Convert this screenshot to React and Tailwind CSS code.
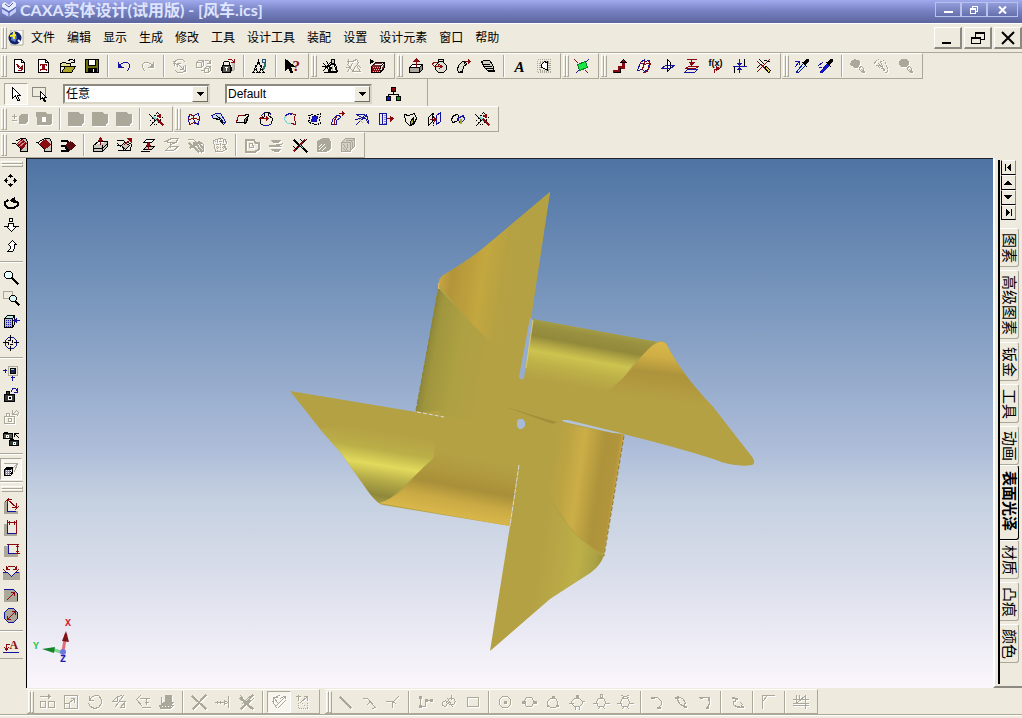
import React, { useState } from 'react';

const K = '#000000';
const W = '#ffffff';
const R = '#8b0a10';
const B = '#1414a0';
const G = '#8c8a80';
const L = '#c9c6bb';
const D = '#aca899';
const Y = '#a8a428';
const C = '#7fd6d6';

// Each icon is a list of [path, stroke, fill, width] or { t, x, y, ... } for lettering.
// Integer coordinates land on pixel centres of a 16px grid.
const ICONS = {
  // standard
  newScene: [['M2 1h7l3 3v10H2z', K, W], ['M9 1v3h3', K], ['M4 6l3 4h2v2H6', R], ['M5 6l4 4M10 7v4M9 8v4', R]],
  newSheet: [['M2 1h7l3 3v10H2z', K, W], ['M9 1v3h3', K], ['M5 6h4M5 11h4M6 7v4M7 6v5M8 7v4M4 6v1M10 6v1M4 11v1M10 11v1', R]],
  open: [['M0 5h1l1-1h3l1 1h4v3H0z', K, '#e8e490'], ['M0 14V6M0 14h11l4-6H5l-4 6', K, Y], ['M8 2l2-1h2l2 2M14 1v3h-3', K]],
  save: [['M1 1h13v13H1z', K, '#6b6b10'], ['M4 1h7v6H4z', K, W], ['M4 10h8v4H4z', K, K], ['M9 11v2', W]],
  undo: [['M2 4v5h5', B], ['M3 8l2-3 3-1h3l2 2v3l-2 3', B], ['M2 5l3 3H2z', B, B]],
  redo: [['M13 4v5H8', D], ['M12 8l-2-3-3-1H4L2 6v3l2 3', D], ['M13 5l-3 3h3z', D, D]],
  link: [['M2 7V3l3-2h5l2 2M4 2L1 5M13 7v5l-3 2H5l-2-2', D], ['M5 5l6 6M5 5h3M5 5v3M11 11H8M11 11V8M1 3l3 3M9 9l4 4', D]],
  boxes: [['M0 4h5v5H0zM0 4l2-2h5L5 4M7 2v5L5 9', D], ['M8 10h4v4H8zM8 10l2-2h4l-2 2M14 8v4l-2 2M9 2h3l2 3M14 2v3h-3', D], ['M5 12h2', D]],
  lock: [['M11 4h3v7l-3 2', D, L], ['M2 7h8v7H2zM1 9v3M11 9v3', K, '#55544e'], ['M3 7V4l1-1h4l1 1v3', K], ['M6 9v3M5 9h2', W], ['M8 1h3l3 3M14 1v3h-3', R]],
  find: [['M1 14l2-6 2 6M7 14l2-6 2 6M4 8l2-6 2 6', K], ['M0 14h2M4 14h4M10 14h2M6 2v3M2 11h2M8 11h2M5 5h2', K], ['M10 1h3v3h-3z', '#2a4a70', '#bff3f3'], ['M12 5v3l-1 2', '#2a7070', 'none', 2]],
  help: [['M1 1v11l3-3 2 5h2L6 8h4z', K, K], { t: '?', x: 8, y: 12, c: R, s: 15, b: true, f: 'Liberation Serif' }],
  team: [['M9 1h3v4H9z', K, L], ['M8 6l-2 7h9l-2-7z', K, '#f4f1e8'], ['M1 5l6 7M8 4L1 12M4 3l4 6M0 8h6M12 7l2 6M2 14h12M9 9l-2 4', K], ['M10 8v4', D]],
  teamOff: [['M1 6l5 6M6 5l-5 8M1 3h4M2 1v4M6 3l4-2 2 3-2 3 4 6M7 13h7M9 8l-3 5M0 9h3M12 7l2 2', D]],
  crate: [['M1 8h9v6H1z', K, R], ['M1 8l4-4h9l-4 4M14 4v5l-4 5', K, '#7c2a2c'], ['M5 6h6l1-1', W], ['M2 9h7M3 11h7M2 13h7', '#e0b8b8', 'none', 1, '1 1'], ['M0 1l3 2M0 1v4l3-2', K, K]],
  // shape features
  extrude: [['M1 9l3-3h10l-3 3z', K, W], ['M1 9h10v5H1z', K, '#aaa89f'], ['M11 9l3-3v5l-3 3z', K, G], ['M8 8V1M8 0l-3 3h6z', R, R]],
  spin: [['M6 1h5v3l3 3v4l-3 3H6l-3-3V7l3-3z', K, '#dedbd0'], ['M6 3h5', K], ['M5 4H1l-1 2 2 2h7M7 6l3 2-3 2M6 6v2', R]],
  sweep: [['M2 14l-1-3 1-4 4-4h3l1 3-3 2-1 5z', K, '#dedbd0'], ['M2 14h4M7 3l2 3', K], ['M9 3h5M12 1l2 2-2 2z', R, R]],
  loft: [['M1 3l3-1h5l3 4 2 7H8L3 8z', K, '#d3d0c6'], ['M1 3l2 3h6M3 8h8M5 10h7M7 12h7', K]],
  textA: [{ t: 'A', x: 2, y: 13, c: K, s: 15, b: true, i: true, f: 'Liberation Serif' }],
  stamp: [['M1 1h13v13H1z', D, 'none', 1, '1 1'], ['M3 3h9v9H3z', D, 'none', 2, '1 1'], ['M5 9V6l3-3 2 1 1-1v9l-3-2z', K, W]],
  plane: [['M3 6l8-3 2 6-8 3z', '#0b7a20', '#18e64a'], ['M0 1l3 3M11 12l2 2', R], ['M14 1l-2 2M4 12l-2 2', B]],
  curve: [['M2 13h5V9h4V4', R, 'none', 3], ['M11 1l-3 3h6z', K, R], ['M2 14h6v-4', K]],
  patch: [['M1 12l3-8 4-3v2l5-1-1 9-4 2-2-2z', B, '#f7f4ea'], ['M4 4l3 2 5-1M8 3l-2 8M12 3l2 2-3 8-4 1', R]],
  planes3: [['M1 10h9l4-3H5z', B], ['M7 1v12l3-3V4z', K, W], ['M1 10h9l4-3H8', B]],
  compress: [['M3 1h9M7 1v5M5 4h5L7 7z', R, R], ['M4 8h10l-3 2H1z', R], ['M3 11h10l-3 3H0z', B]],
  fx: [{ t: 'f(x)', x: 0, y: 7, c: K, s: 9, b: true, f: 'Liberation Sans' }, ['M6 14v-3l3-1', R], ['M8 8l3 2-3 2z', R, R]],
  offsetC: [['M2 14V8h10V1', K], ['M1 8h13M7 1v13', B], ['M5 5h4L7 7zM5 11h4L7 9z', B, B]],
  trim: [['M1 3l12 11M1 13L13 1', R], ['M4 6l-3 3M8 2l5 1M3 1l4 4', K], ['M8 9l2-1 4 4-2 2z', K, '#e4d74a']],
  dropA: [['M3 12l6-7 2 2-7 7H2z', B, '#c8f2f2'], ['M9 4l3-3h2v2l-3 3z', K, K], ['M8 4l4 4', K], ['M1 8l2-2M1 3h4v3M5 3L2 6', B]],
  dropB: [['M3 12l6-7 2 2-7 7H2z', B, '#1515e0'], ['M9 4l3-3h2v2l-3 3z', K, K], ['M8 4l4 4', K], ['M0 7l4-3M1 9h2', B]],
  blobA: [['M1 3l3-2 3 1 2 1v3L7 9H4L2 7 0 6z', D, D], ['M9 9l2-1 2 2v2l1 2M9 9v2l3 3M11 11l2 3', D]],
  blobB: [['M1 3l3-2 2 2 3-1 2 2v2l2 3v5h-2l-3-4-3-1-3-2-2-2z', D, 'none', 1, '2 1'], ['M4 5l6 6M3 7l5 1M6 3l2 5', D]],
  blobC: [['M3 1h5l2 2v3L8 8H3L1 6V3z', D, D], ['M9 9l2-1 2 2v2l1 2M9 9v2l3 3M11 11l2 3', D]],
  // selection
  pointer: [['M4 1v11l3-3 2 5h2L9 9h3z', K, W]],
  pick: [['M0 1h13v9H0z', G], ['M8 5v8l2-2 2 4h1l-1-4h2z', K, W]],
  tree: [['M8 5v3M3 11V8h10v3', K], ['M6 1h4v4H6z', K, R], ['M1 10h4v4H1z', K, '#1515c8'], ['M11 10h4v4h-4z', K, '#128a20']],
  // boolean
  bool1: [['M0 5h4M2 3v4M0 9h4', D], ['M7 5l2-2h6v7l-2 2H7z', D, D]],
  bool2: [['M0 1h9l1 2h5v8l-1 2H1V5H0z', D, D], ['M6 6h3v4H6z', W, W]],
  bool3: [['M0 1h10l2 2h3v8l-2 2v1H0z', D, D]],
  cutter: [['M9 1l5 5-7 8-5-5z', K, 'none', 1, '2 1'], ['M1 3l4 4M6 5v4M2 14l5-5', K], ['M6 6l3 3', C, 'none', 2], ['M9 8l5 5M9 4h2M11 3v2', R, 'none', 2]],
  // surface
  mesh: [['M3 3l4 1 5-2 1 5-1 6-4-2-5 2-1-6z', B], ['M7 4l1 8', B], ['M3 3l4 1M2 8l5-1 6 1M8 11l-5 2', R]],
  ruled: [['M1 4l5-2h4l5 8-1 2-5-4-3-1H3z', B, '#c8dcf4'], ['M3 7l6 1 4 5M6 4l6 5', K]],
  bevel: [['M4 4h4l6-1-2 8H2z', K, '#f1eee3'], ['M2 10l2-6h4', R], ['M10 8l3-3-1 6-2 1z', K, G]],
  revolve: [['M6 1h4v3l4 3-1 5-3 2H5l-3-2V8l4-3z', K], ['M6 1L3 4M11 1l1 2M5 14h5l3-2', B], ['M1 7h7M8 5l2 2-2 2zM4 5l-3 2', R, R]],
  outline: [['M3 4l4-2 6 1-1 3 1 7', R], ['M3 4L2 8l3 4h4', C], ['M3 4l4-2 2 1', B], ['M9 12l4 1', R]],
  inset: [['M2 4l4-1 3 1 5-2-1 7 1 3-4 1-8-2 1-4z', K, 'none', 1, '2 1'], ['M6 5h5l-1 5H5z', B, '#1515e0']],
  sweepS: [['M3 13H1l1-5 4-4h3l1 2-4 3v4z', B, '#f6f3e8'], ['M6 5L4 9v4', R], ['M9 2h5M12 0l2 2-2 2z', R, R]],
  strips: [['M2 3h7l4 2 1 7', B], ['M2 3l5 3 4 1 3 5M1 8l5-1 6-4M2 13l4-4 5-4', B], ['M5 8l3 3', D]],
  thick: [['M1 2h7v11H1zM4 2v11', B], ['M6 3v9', '#8888d0', 'none', 2, '1 1'], ['M9 7h5M12 5l3 2-3 3z', R, R]],
  corner: [['M2 3l4 1 6-2 2 5-3 6-4 1-4-4z', K, '#eeeade'], ['M11 6l-3 4v3l3-1z', K, Y]],
  mirror: [['M6 2v8l-4 4V6z', K], ['M14 1v9l-4 3V4z', B], ['M7 1v13', K, 'none', 1, '2 1'], ['M4 8h6M8 6l2 2-2 2z', R, R]],
  join: [['M1 8l2-4 4-1 2 3-3 4-4 1z', K], ['M7 7l6-3 1 4-4 4-2-3z', B, '#e5e2d6'], ['M10 8v3', Y, 'none', 2]],
  // face ops
  fillet: [['M9 1h4l2 3v10H8z', K, L], ['M4 7l6-5 4 4-5 6z', R, R], ['M5 7l5-4M7 9l5-4', '#d49090'], ['M0 6h3l5 5v3M4 3l5-2', K]],
  chamfer: [['M9 1h4l2 3v10H8z', K, L], ['M3 7l6-5 5 5-6 5z', R, R], ['M0 5h2M2 6l6 6v2M3 4l5-3', K]],
  draft: [['M1 3h5l2 2', K, 'none', 2], ['M5 8l5-4 5 4-4 4-3 1z', '#5a0a0e', '#5a0a0e'], ['M1 8h3l3 4M1 13h6', K, 'none', 2]],
  shell: [['M1 8l5-4h9l-5 4z', K, W], ['M1 8v6h9l5-5V4', K, L], ['M1 11h9l5-5M10 8v5', K], ['M8 7V2M6 3l2-3 2 3z', R, R]],
  split: [['M1 3h6l2 2M1 8h4l3 5h6l1-6-3-2', K, 'none'], ['M5 8l3-3 5 3-4 4z', K, L], ['M2 13h5M1 6l3 3', K], ['M8 7l5-4M11 1h4v4z', R, R]],
  moveF: [['M3 5l3-3h8l-3 3z', K, W], ['M3 12l3-3h8l-3 3z', K, L], ['M1 14h8', K], ['M8 12V6M6 8l2-3 2 3z', R, R]],
  grayA: [['M1 4l6-3h7l-3 4H5zM1 13l4-4h9l-5 4zM6 6v4M6 7l6-2', D]],
  grayB: [['M0 2h5l3 3 3-1 4 3v7l-4-4', D], ['M5 5h5l4 5M2 10l6-4M1 6l9 8M5 9l5-4M9 8l4 6', D, 'none', 2]],
  grayC: [['M1 3l6-2 6 1 1 4-2 2 2 4-5 2H3l-1-5z', D, 'none', 1], ['M2 4h11M3 7h9M3 10h10M5 2v11M8 1v12M11 2v10', D, 'none', 1, '1 1']],
  grayD: [['M1 2h8l2 3h3v7l-3 2H1z', D, 'none', 2], ['M5 6h3l1 4H5z', D]],
  grayE: [['M3 3h9l-2 2H5zM1 8h10l3-2M3 12h9l-2 2H6z', D, D], ['M1 9h12', D]],
  grayF: [['M1 4l5-3h6l2 3v7l-4 3H1z', D, D], ['M3 12l5-5M3 9l2-2M6 13l3-3', W]],
  grayG: [['M1 5l4-4h9v8l-5 5H1zM1 5h9v9M10 5l4-4', D, '#d4d0c3', 1], ['M3 7l4 6M3 11l3 3M7 7v3M12 5v5M6 3h5', D]],
  removeF: [['M2 3l3 3M9 9l5 5', K, 'none', 2], ['M2 13L12 3', R, 'none', 2], ['M8 2l3 3 3-3M1 9l3 3 2-4M5 6l4 4', K], ['M8 8l2 2', C]],
  // camera
  pan: [['M7 1L5 3h4zM7 13l-2-2h4zM1 7l2-2v4zM13 7l-2-2v4z', K, K], ['M7 1v3M7 10v3M1 7h3M10 7h3', K]],
  orbit: [['M4 5L1 7v2l3 3h7l3-2V7l-2-1', K, 'none', 2], ['M7 5l4-3v5z', K, K]],
  dolly: [['M6 1h3v3H6zM5 6h5v3h3l-5 5-5-5h2z', K, W], ['M3 9H1M13 9h2', K]],
  walk: [['M6 4l3-3 4 4h-2v4l-2 3H4l3-3V7L5 5z', K, W]],
  zoom: [['M3 2h4l2 2v3L7 9H3L1 7V4z', K, '#e6ffff'], ['M9 9l5 5', K, 'none', 2]],
  zoomWin: [['M0 0h9v7H0z', D], ['M8 4h3l2 2v2l-2 2H8L6 8V6z', K, '#d8f6f4'], ['M12 10l3 3', K, 'none', 2]],
  lookAt: [['M1 5h8v9H1z', K, '#b8b8e0'], ['M1 5l3-3h7L9 5zM11 2v9l-2 3', K, '#bfeeee'], ['M2 7h6M2 9h6M2 11h6M2 13h6', B, 'none', 1, '1 1'], ['M12 7h4M13 5l-3 2 3 2z', B, B]],
  target: [['M5 2h5l3 3v5l-3 3H5l-3-3V5z', B], ['M7 0v4M7 11v4M0 7h4M11 7h4', K], ['M5 5h2M9 5v2M5 9v-2M9 9H7', K]],
  viewBox: [['M5 1h9v9H5z', D], ['M7 3h5v5H7z', K, '#1d2550'], ['M0 5h3M2 4v3M9 11v4M8 12h3', B], ['M8 4h2', C]],
  camNext: [['M1 7h10v7H1zM3 6V4h3v2', K, '#3b3b33'], ['M5 9h3v3H5z', W, K], ['M8 4l1-3h3l2 3M14 1v4h-3', B]],
  camOff: [['M1 7h10v7H1zM3 6V4h3v2', D], ['M5 9h3v3H5z', D], ['M9 5V1M9 5h4M9 5l4-4 2 2-1 3', D]],
  camTwo: [['M0 2h9v5H0zM1 1h3', K, '#55554c'], ['M3 4h2v2H3z', W], ['M6 9h9v5H6zM7 8h3', K, '#2c3a34'], ['M10 11h2v2h-2z', W], ['M11 2h4M11 2v3M11 2l4 4', K]],
  render: [['M1 2h13L8 8M14 2l-3 8', D], ['M1 8h6v6H1z', K, '#8888b8'], ['M1 8l2-2h6L7 8M9 6v6l-2 2', K, K], ['M2 9h5M2 11h5M2 13h5', W, 'none', 1, '1 1']],
  // dimensions
  dimAlign: [['M1 4h3v9h10v2H1z', D, D], ['M4 3v10h8', B], ['M4 1l9 8M4 1h4M4 1v4M13 9H9M13 9V5M2 3l3-3M12 11l3-3', R]],
  dimH: [['M1 4h3v9h9v2H1z', D, D], ['M4 2v11h9V2', B], ['M4 2h9M4 0v5M13 0v13M6 1v3M11 1v3', R]],
  dimV: [['M1 4h4v8h9v2H1z', D, D], ['M5 3v8h8', B], ['M4 2h11M14 2v9M12 11h4M13 4h2M13 9h2', R]],
  dimAng: [['M0 8h4l4 5 4-5h4v7H0z', D, D], ['M0 8h4l4 4 4-4h3', B], ['M3 5l2-3h6l2 3M3 5V2M3 5h3M13 5V2M13 5h-3M0 5l2 2M15 5l-2 2', R]],
  dimRad: [['M1 3h9l4 4v8H1z', D, D], ['M1 3h9l4 4v7', B], ['M4 13l7-7M11 6H8M11 6v3', R]],
  dimDia: [['M5 0h5l4 4v6l-4 4H5l-4-4V4z', B, D], ['M4 11l8-8M12 3H9M12 3v3M4 11V8M4 11h3', R]],
  note: [{ t: 'A', x: 6, y: 10, c: R, s: 12, b: true, f: 'Liberation Serif' }, ['M3 12V6h3M1 9l2 3 2-3', R], ['M0 14h15', B, 'none', 1]],
  // sketch bar
  sk1: [['M1 2h10M9 0l2 2-2 2zM1 7h5v6H1zM9 7h6v6H9z', D]],
  sk2: [['M1 1h13v13H1zM1 9h5v5M5 9l6-5M8 4h3v4', D]],
  sk3: [['M2 2v4h4M2 6l2-3 3-2h4l3 4v4l-3 4-4 1-4-2-2-3', D]],
  sk4: [['M1 7l5-5v5zM4 12L12 1M9 7h5M9 13l4-5v5zM7 2l3-1', D]],
  sk5: [['M1 5l4-4M2 6l4 5M5 4h9M7 13h8M11 5v5M10 8h3', D]],
  sk6: [['M6 1h6v6H6zM4 8h10l-2 2H2zM0 11h14l-3 3H1z', D, D], ['M2 12h10', W, 'none', 1, '1 2'], ['M2 3v6', D]],
  sk7: [['M1 2l13 12M14 1L2 14', D, 'none', 2]],
  sk8: [['M0 8h8M13 2v11M9 6v4l3-2z', D], ['M2 7v2M5 7v2', D]],
  sk9: [['M1 4l12 10M13 1L2 14', D, 'none', 2], ['M1 1l10 13M3 9l7-7M5 12l9-8', D]],
  sk10: [['M2 3h4M2 3v4M3 4l3 4M3 3l5-2M4 12l9-9M7 13l7-7M9 4l3-2h2v2M1 7l4 6', D]],
  sk11: [['M1 2h4M3 1v5M5 8l7-6v4M12 2H9', D], ['M3 8v6h9V8M5 8l6 4', D, 'none', 1, '1 1']],
  line: [['M3 3l10 10', D, 'none', 2]],
  tangent: [['M2 4h4l7 8M6 10l3-3M11 14l3-1', D]],
  perp: [['M13 2l-6 6v5M1 7h6l3 2', D]],
  poly: [['M3 3v9h5V6h6', D], ['M2 2h2v2H2zM2 11h2v2H2zM8 5h2v2H8zM13 5h2v2h-2z', D, D]],
  rings: [['M1 8l3-2 2 3-2 3-3-1zM8 4h4l2 3-2 3H8L6 7zM6 4l5 8M10 1v4', D]],
  rect: [['M2 3h11v9H2z', D]],
  circC: [['M5 2h5l3 3v5l-3 3H5l-3-3V5z', D], ['M7 7h1v1H7z', D, D, 2]],
  circ2: [['M5 3h5l2 3v3l-2 3H5L3 9V6z', D], ['M1 7h2v1H1zM13 7h1v1h-1z', D, D, 2]],
  circ3: [['M5 4h5l2 3v3l-2 3H5l-3-3V7z', D], ['M7 2h2v2H7zM2 11h1v1H2zM12 11h1v1h-1z', D, D]],
  circ4: [['M5 4h5l3 3v2l-3 3H5L2 9V7z', D], ['M7 1h2v3H7zM0 9h4M13 7h2M6 12v3M10 12v3', D, D]],
  circ5: [['M5 4h5l2 3v2l-2 3H5L3 9V7z', D], ['M7 0h2v3H7zM0 9h4M12 9h4M5 14l2-2M11 14l-2-2', D]],
  circ6: [['M5 4h5l2 3v2l-2 3H5L3 9V7z', D], ['M4 1l7 2M11 1L5 3M0 9h4M12 9h4M5 14l2-2M11 14l-2-2', D]],
  arc1: [['M3 3h5l4 4v3l-3 3', D], ['M2 3h2M8 13h2', D, 'none', 2]],
  arc2: [['M3 3l3 6 4 3 2-4-3-4-5-2', D], ['M2 3h2M11 12h1', D, 'none', 2]],
  arc3: [['M2 3h10v6l-2 4', D], ['M3 3h1M11 4v1M9 13h1', D, 'none', 2]],
  spline: [['M3 4h3v3H4v3l4 3h3l2-3-2-2', D], ['M3 3h1M6 4h1M8 12h1M12 12h1', D, 'none', 2]],
  cornerR: [['M1 14V7l5-6h7M1 1h5M1 1v6', D]],
  grid: [['M0 5h15M0 9h15M3 1v8M12 1v13M3 9l9-8M0 11h15M6 1v4', D]],
};

function Icon({ name }) {
  const off = ICONS[name].every((s) => s[1] === D || s[1] === W);
  return (
    <svg
      width="16"
      height="16"
      viewBox="-0.5 -0.5 16 16"
      shapeRendering="crispEdges"
      aria-hidden="true"
      className={`shrink-0 overflow-visible ${off ? 'drop-shadow-[1px_1px_0_#fff]' : ''}`}
    >
      {ICONS[name].map((s, i) =>
        s.t ? (
          <text
            key={i}
            x={s.x}
            y={s.y}
            fill={s.c}
            fontSize={s.s}
            fontWeight={s.b ? 700 : 400}
            fontStyle={s.i ? 'italic' : 'normal'}
            fontFamily={s.f}
          >
            {s.t}
          </text>
        ) : (
          <path
            key={i}
            d={s[0]}
            stroke={s[1]}
            fill={s[2] || 'none'}
            strokeWidth={s[3] || 1}
            strokeDasharray={s[4]}
            strokeLinecap={s[4] ? 'butt' : 'square'}
          />
        )
      )}
    </svg>
  );
}

const sunken = 'border-[#aca899] border-r-white border-b-white bg-[#f7f5ee]';

function Tool({ name, pressed, narrow }) {
  return (
    <button
      type="button"
      aria-label={name}
      className={`flex h-[22px] shrink-0 items-center justify-center border ${narrow ? 'w-[22px]' : 'w-6'} ${
        pressed ? sunken : 'border-transparent'
      }`}
    >
      <Icon name={name} />
    </button>
  );
}

function Grip() {
  return (
    <div className="flex h-[22px] w-2 shrink-0 pl-px">
      <span className="w-[3px] border border-white border-r-[#aca899] border-b-[#aca899]" />
      <span className="w-[3px] border border-white border-r-[#aca899] border-b-[#aca899]" />
    </div>
  );
}

function Sep() {
  return (
    <div className="flex h-[22px] w-2 shrink-0 justify-center">
      <span className="w-[2px] border-r border-l border-l-[#aca899] border-r-white" />
    </div>
  );
}

// "|" in a list of names stands for a separator, "*" marks a pressed button.
function Bar({ items }) {
  return (
    <div className="mr-px flex shrink-0 items-center border-t border-r border-b border-t-white border-r-[#aca899] border-b-[#aca899] py-px pr-1">
      <Grip />
      {items.split(' ').map((n, i) =>
        n === '|' ? <Sep key={i} /> : <Tool key={i} name={n.replace('*', '')} pressed={n.startsWith('*')} />
      )}
    </div>
  );
}

function Combo({ label, options }) {
  return (
    <div className="relative h-5 w-[147px] shrink-0 border-2 border-[#8c8a80] border-r-[#d8d4c6] border-b-[#d8d4c6] bg-white">
      <select aria-label={label} className="block h-full w-full appearance-none bg-white pl-px text-xs leading-4 outline-none">
        {options.map((o) => (
          <option key={o}>{o}</option>
        ))}
      </select>
      <span className="pointer-events-none absolute top-0 right-0 flex h-4 w-4 items-center justify-center border border-white border-r-[#716f64] border-b-[#716f64] bg-[#eeeade]">
        <svg width="7" height="4" viewBox="0 0 7 4" shapeRendering="crispEdges"><path d="M0 0h7L3.500 4z" /></svg>
      </span>
    </div>
  );
}

const menus = ['文件', '编辑', '显示', '生成', '修改', '工具', '设计工具', '装配', '设置', '设计元素', '窗口', '帮助'];

function TitleBar() {
  const btn = 'flex h-[15px] items-center justify-center border border-[#b9c1ee] bg-gradient-to-b from-[#929cd8] to-[#6670ae]';
  return (
    <header className="flex h-[23px] shrink-0 items-start justify-between bg-gradient-to-b from-[#a0aaee] via-[#7580c0] to-[#5c659c] pr-1">
      <div className="flex items-center gap-1 pt-px pl-[2px]">
        <svg width="14" height="17" viewBox="0 0 14 17" aria-hidden="true">
          <path d="M0 3l3-2 4 3 4-4 3 2v4L7 10 0 6z" fill="#e7ecff" />
          <path d="M0 8l7 4 7-5v4l-7 5-7-4z" fill="#c5cefa" />
          <path d="M3 3l4 3 4-4M0 7l7 4v5M7 11l7-5" stroke="#4f5cb4" fill="none" />
        </svg>
        <h1 className="font-['Lato','Noto_Sans_CJK_SC',sans-serif] text-base leading-[17px] font-bold text-[#dfe4ff]">
          CAXA实体设计(试用版) - [风车.ics]
        </h1>
      </div>
      <div className="flex pt-[2px]">
        <button type="button" aria-label="最小化" className={`${btn} w-[26px]`}>
          <span className="mt-1 h-[2px] w-[9px] bg-white" />
        </button>
        <button type="button" aria-label="还原" className={`${btn} w-[26px]`}>
          <svg width="8" height="8" viewBox="-0.5 -0.5 8 8" shapeRendering="crispEdges" fill="none" stroke="#fff"><path d="M2 2V0h5v5H5M0 2h5v5H0zM0 3h5" /></svg>
        </button>
        <button type="button" aria-label="关闭" className={`${btn} w-[31px]`}>
          <svg width="9" height="8" viewBox="0 0 9 8" stroke="#fff" strokeWidth="2"><path d="M1 0.500l7 7M8 0.500l-7 7" /></svg>
        </button>
      </div>
    </header>
  );
}

function MenuBar() {
  const btn = 'flex h-[22px] w-7 items-center justify-center border border-white border-r-2 border-b-2 border-r-[#8c8a80] border-b-[#8c8a80]';
  return (
    <nav className="flex h-[30px] shrink-0 items-center justify-between border-t border-b border-t-white border-b-[#aca899]">
      <div className="flex items-center">
        <Grip />
        <svg width="16" height="16" viewBox="0 0 16 16" className="mr-px" aria-hidden="true">
          <path d="M3 0h12v15H3z" fill="#fff" stroke="#aca899" />
          <circle cx="7" cy="8" r="6.500" fill="#10206a" />
          <path d="M4 3l4 1 1 4-2 4-4-2z" fill="#5a7ac8" />
          <path d="M6 2v7M2 6l6-1" stroke="#f2ec30" strokeWidth="2" />
          <path d="M10 10l2 2" stroke="#fff" strokeWidth="2" />
        </svg>
        {menus.map((m) => (
          <button key={m} type="button" className="px-1.5 text-xs leading-5">{m}</button>
        ))}
      </div>
      <div className="flex gap-[2px]">
        <button type="button" aria-label="最小化窗口" className={btn}>
          <svg width="16" height="16" viewBox="0 0 16 16"><path d="M2 12h9v2H2z" /></svg>
        </button>
        <button type="button" aria-label="还原窗口" className={btn}>
          <svg width="16" height="16" viewBox="-0.5 -0.5 16 16" shapeRendering="crispEdges" fill="none" stroke="#000"><path d="M5 6V2h9v7h-4M5 3h9M1 7h9v6H1zM1 8h9" /></svg>
        </button>
        <button type="button" aria-label="关闭窗口" className={btn}>
          <svg width="16" height="16" viewBox="0 0 16 16" stroke="#000" strokeWidth="2"><path d="M2 2l12 12M14 2L2 14" /></svg>
        </button>
      </div>
    </nav>
  );
}

function SideBar() {
  const groups = [
    ['pan', 'orbit', 'dolly', 'walk'],
    ['zoom', 'zoomWin', 'lookAt', 'target'],
    ['viewBox', 'camNext', 'camOff', 'camTwo'],
    ['*render'],
  ];
  const hgrip = (
    <div className="mb-[3px] flex flex-col pl-px">
      <span className="h-[3px] border border-white border-r-[#aca899] border-b-[#aca899]" />
      <span className="h-[3px] border border-white border-r-[#aca899] border-b-[#aca899]" />
    </div>
  );
  const rule = <div className="my-[3px] h-[2px] border-t border-b border-t-[#aca899] border-b-white" />;
  return (
    <aside className="flex w-[27px] shrink-0 flex-col border-r border-r-black">
      <div className="flex w-[23px] flex-col border-b border-b-[#aca899] pt-[3px] pb-px">
        {hgrip}
        {groups.map((g, i) => (
          <React.Fragment key={i}>
            {i > 0 && rule}
            {g.map((n) => <Tool key={n} name={n.replace('*', '')} pressed={n.startsWith('*')} narrow />)}
          </React.Fragment>
        ))}
      </div>
      <div className="flex w-[23px] flex-col border-t border-b border-t-white border-b-[#aca899] pt-[3px] pb-px">
        {hgrip}
        {['dimAlign', 'dimH', 'dimV', 'dimAng', 'dimRad', 'dimDia'].map((n) => <Tool key={n} name={n} narrow />)}
        {rule}
        <Tool name="note" narrow />
      </div>
    </aside>
  );
}

function Pinwheel() {
  const stops = (list) => list.map(([o, c]) => <stop key={o} offset={o} stopColor={c} />);
  return (
    <svg viewBox="27 159 966 529" className="block h-full w-full" role="img" aria-label="风车">
      <defs>
        <linearGradient id="tl" gradientUnits="userSpaceOnUse" x1="427" y1="350" x2="490" y2="361">
          {stops([[0, '#8f883a'], [0.12, '#a0963e'], [0.5, '#aea143'], [1, '#b4a144']])}
        </linearGradient>
        <linearGradient id="tf" gradientUnits="userSpaceOnUse" x1="439" y1="280" x2="516" y2="292">
          {stops([[0, '#c9a545'], [0.15, '#b3953a'], [0.55, '#c3a73f'], [0.8, '#b6a142'], [1, '#b4a144']])}
        </linearGradient>
        <linearGradient id="rc" gradientUnits="userSpaceOnUse" x1="590" y1="328" x2="577" y2="400">
          {stops([[0, '#a59e47'], [0.1, '#999140'], [0.24, '#928a3b'], [0.34, '#b4a946'], [0.44, '#cdc34f'], [0.6, '#beb148'], [0.82, '#b4a144']])}
        </linearGradient>
        <linearGradient id="rf" gradientUnits="userSpaceOnUse" x1="664" y1="342" x2="656" y2="410">
          {stops([[0, '#d9b74b'], [0.22, '#cfae45'], [0.46, '#ad933b'], [0.7, '#b39b40'], [0.85, '#b4a144']])}
        </linearGradient>
        <linearGradient id="bc" gradientUnits="userSpaceOnUse" x1="550" y1="474" x2="618" y2="484">
          {stops([[0, '#b4a144'], [0.2, '#bda442'], [0.42, '#ccae47'], [0.72, '#ad933b'], [0.92, '#b2953b'], [1, '#d0a545']])}
        </linearGradient>
        <linearGradient id="bf" gradientUnits="userSpaceOnUse" x1="540" y1="560" x2="608" y2="571">
          {stops([[0, '#b4a144'], [0.55, '#bdaf48'], [0.8, '#aba244'], [1, '#8b8337']])}
        </linearGradient>
        <linearGradient id="lc" gradientUnits="userSpaceOnUse" x1="398" y1="430" x2="386" y2="504">
          {stops([[0.05, '#b4a144'], [0.3, '#bbaf48'], [0.5, '#e1da5c'], [0.7, '#b5ab48'], [0.9, '#8f883a'], [1, '#a39b42']])}
        </linearGradient>
        <linearGradient id="lf" gradientUnits="userSpaceOnUse" x1="458" y1="452" x2="446" y2="516">
          {stops([[0.05, '#b4a144'], [0.3, '#b0993e'], [0.52, '#a88f39'], [0.75, '#caaa44'], [1, '#dab84b']])}
        </linearGradient>
      </defs>
      <path
        d="M550 192L530 320 519 378l3 2 10-61 125 23q5-2 9 1 15 31 47 64l39 50q4 6 0 8-20 2-38-6-42-13-90-25L604 556q-5 13-22 22-24 14-34 22L490 651 510 526 383 505Q376 504 363 484L341 453 320 429 290 391 416 412 438 288Q437 281 445 275 475 256 487 245z"
        fill="#b4a144"
      />
      <path d="M438 288L416 411l64 11 30-60z" fill="url(#tl)" />
      <path d="M550 192l-63 53q-14 12-42 29-7 4-6 9 20 30 56 63l24 28 12-55z" fill="url(#tf)" />
      <path d="M532 319l125 23q-18 14-34 36l-35 30-64-28z" fill="url(#rc)" />
      <path d="M590 408q34-28 50-49 12-16 20-17 5-1 8 5 13 26 45 60l39 50q4 6 0 8-20 2-38-6-42-14-120-32z" fill="url(#rf)" />
      <path d="M550 421l74 14-21 119q-22-12-36-31l-25-40z" fill="url(#bc)" />
      <path d="M520 466l44 54q15 22 39 36-2 9-13 17l-40 26-58 50z" fill="url(#bf)" />
      <path d="M320 429l21 24 22 31q10 15 16 19h4q14-9 29-25l21-18 8-50z" fill="url(#lc)" />
      <path d="M440 453q-12 9-24 22-16 22-37 28l131 23 9-62z" fill="url(#lf)" />
      <path d="M439 289l-23 121" stroke="#8a8238" strokeDasharray="5 2" />
      <path d="M439 283q-1 4 0 6" stroke="#e6c878" fill="none" />
      <path d="M417 412l27 5" stroke="#d7d9dc" strokeDasharray="4 2" />
      <path d="M530 318l-11 59q2 4 5 1l9-58z" fill="#97add0" />
      <path d="M533 320l-7 48" stroke="#d8c878" />
      <path d="M507 407q30 10 50 15l-4 2q-20-7-46-17z" fill="#a38e3a" />
      <path d="M562 420h6l57 14-12-1-49-11z" fill="#b4c2d6" />
      <path d="M519 465l-9 61" stroke="#d8dadd" strokeDasharray="5 1" />
      <path d="M624 436l-20 120" stroke="#8f7a30" strokeDasharray="4 2" />
      <path d="M519 419h4l2 3v4l-3 3h-3l-2-3v-5z" fill="#a9bad6" />
    </svg>
  );
}

function Axes() {
  return (
    <svg width="44" height="48" viewBox="0 0 44 48" className="absolute bottom-6 left-[6px]" aria-hidden="true">
      <g fontFamily="Liberation Mono" fontSize="10" fontWeight="700">
        <text x="32" y="10" fill="#d8202c">X</text>
        <text x="0" y="33" fill="#28c840">Y</text>
        <text x="27" y="46" fill="#1c1cb0">Z</text>
      </g>
      <path d="M30 35l3-17" stroke="#e07078" strokeWidth="3" />
      <path d="M33 15l3 11-7-1z" fill="#7c1418" />
      <path d="M28 36l-10-3" stroke="#78d888" strokeWidth="3" />
      <path d="M9 33l13-2-1 6z" fill="#148428" />
      <circle cx="30" cy="36" r="3" fill="#7078e0" />
    </svg>
  );
}

const catalogs = ['图素', '高级图素', '钣金', '工具', '动画', '表面光泽', '材质', '凸痕', '颜色'];
const navs = [
  ['第一个', 'M1 0h1v7H1zM7 0v7L3 3.500z'],
  ['上一个', 'M0 6h8L4 1z'],
  ['下一个', 'M0 1h8L4 6z'],
  ['最后一个', 'M7 0h1v7H7zM2 0v7l4-3.500z'],
];

function CatalogPanel() {
  const [active, setActive] = useState('表面光泽');
  return (
    <aside className="flex w-[29px] shrink-0 flex-col border-b-2 border-l-2 border-b-[#8c8a80] border-l-white pt-[2px] pb-[2px] pl-[3px]">
      <div className="flex flex-1 flex-col border-l-2 border-l-black">
        <div className="mb-2 flex flex-col pl-px">
          {navs.map(([label, d]) => (
            <button
              key={label}
              type="button"
              aria-label={label}
              className="flex h-[15px] w-[15px] items-center justify-center border border-black border-t-white border-r-[#8c8a80]"
            >
              <svg width="9" height="7" viewBox="0 0 9 7" shapeRendering="crispEdges"><path d={d} /></svg>
            </button>
          ))}
        </div>
        <div role="tablist" aria-orientation="vertical" className="flex flex-col items-start gap-[3px]">
          {catalogs.map((c) => (
            <button
              key={c}
              type="button"
              role="tab"
              aria-selected={c === active}
              onClick={() => setActive(c)}
              className={`w-[19px] rounded-r-[3px] border border-l-0 border-t-white text-[15px] leading-[18px] [text-orientation:sideways] [writing-mode:vertical-rl] ${
                c === active
                  ? 'mt-[-3px] mb-[-3px] border-r-black border-b-black pt-[5px] pb-[8px] font-bold'
                  : 'border-r-[#aca899] border-b-[#aca899] pt-[4px] pb-[3px]'
              }`}
            >
              {c}
            </button>
          ))}
        </div>
      </div>
    </aside>
  );
}

export default function App() {
  return (
    <div className="flex h-screen flex-col overflow-hidden bg-[#eeeade] font-['Liberation_Sans','Noto_Sans_CJK_SC',sans-serif] text-black">
      <TitleBar />
      <MenuBar />

      {/* toolbars */}
      <div className="flex h-[26px] shrink-0">
        <Bar items="newScene newSheet open save | undo redo | link boxes lock | find | help" />
        <Bar items="team teamOff crate" />
        <Bar items="extrude spin sweep loft | textA stamp" />
        <Bar items="plane" />
        <Bar items="curve patch planes3 compress fx offsetC trim" />
        <Bar items="dropA dropB | blobA blobB blobC" />
      </div>
      <div className="flex h-[27px] shrink-0">
        <div className="flex items-center border-r border-r-[#aca899] pt-[3px] pr-[22px] pl-1">
          <Tool name="pointer" pressed />
          <Tool name="pick" />
          <div className="ml-[11px] flex items-center gap-[15px]">
            <Combo label="选择过滤" options={['任意', '零件', '面', '边']} />
            <Combo label="配置" options={['Default']} />
          </div>
          <div className="ml-[9px]"><Tool name="tree" /></div>
        </div>
      </div>
      <div className="flex h-[26px] shrink-0">
        <Bar items="bool1 bool2 | bool3 bool3 bool3 | cutter" />
        <Bar items="mesh ruled bevel revolve outline inset sweepS strips thick corner mirror join cutter" />
      </div>
      <div className="flex h-[26px] shrink-0">
        <Bar items="fillet chamfer draft | shell split moveF grayA grayB grayC | grayD grayE removeF grayF grayG" />
      </div>

      {/* workspace */}
      <div className="flex min-h-0 flex-1">
        <SideBar />
        <main className="relative min-w-0 flex-1 border-t border-t-[#20242c] bg-[linear-gradient(to_bottom,#4f74a4_0%,#7f9bc0_30%,#aebdd9_55%,#c4d0e0_64%,#dcdfec_80%,#fbf6fc_100%)]">
          <Pinwheel />
          <Axes />
        </main>
        <CatalogPanel />
      </div>

      {/* sketch bars */}
      <footer className="flex h-[30px] shrink-0 flex-col">
        <div className="flex h-[27px] gap-1 border-b border-b-[#aca899] pt-px pl-[27px]">
          <Bar items="sk1 sk2 sk3 sk4 sk5 sk6 | sk7 sk8 sk9 | *sk10 sk11" />
          <Bar items="line tangent perp | poly rings rect | circC circ2 circ3 circ4 circ5 circ6 | arc1 arc2 arc3 | spline | cornerR | grid" />
        </div>
        <div className="border-t border-t-white" />
      </footer>
    </div>
  );
}
